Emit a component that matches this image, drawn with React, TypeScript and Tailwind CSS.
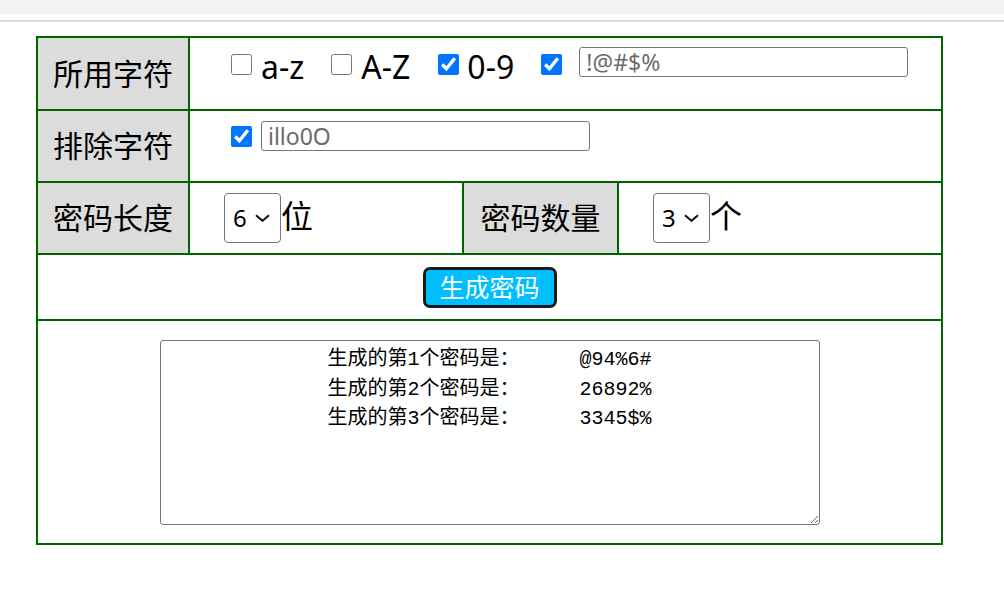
import { useState } from 'react';

const cellBorder = 'border-2 border-[#006400]';
const labelCell = `${cellBorder} bg-[#dcdcdc] text-center align-middle text-[30px] leading-[40px] p-0`;

function FakeSelect({ value }: { value: string }) {
  return (
    <div className="flex items-center w-[57px] h-[50px] border border-[#767676] rounded-[4px] bg-white pl-[8px]">
      <span className="text-[24px] leading-none">{value}</span>
      <svg className="ml-[8px]" width="15" height="8" viewBox="0 0 15 8" fill="none">
        <polyline points="1,1.2 7.5,6.8 14,1.2" stroke="#111" strokeWidth="2" />
      </svg>
    </div>
  );
}

export default function App() {
  const [lower, setLower] = useState(false);
  const [upper, setUpper] = useState(false);
  const [digits, setDigits] = useState(true);
  const [symbols, setSymbols] = useState(true);
  const [exclude, setExclude] = useState(true);

  const output = [
    '生成的第1个密码是：     @94%6#',
    '生成的第2个密码是：     26892%',
    '生成的第3个密码是：     3345$%',
  ].join('\n');

  return (
    <div className="w-[1004px] h-[596px] bg-white text-black font-['Noto_Sans','Noto_Sans_CJK_SC',sans-serif]">
      <div className="h-[14px] bg-[#f1f2f4]" />
      <div className="mt-[6px] h-[2px] bg-[#dcdcdc]" />

      <table className="ml-[36px] mt-[14px] w-[907px] table-fixed border-collapse border-2 border-[#006400]">
        <colgroup>
          <col className="w-[152px]" />
          <col className="w-[274px]" />
          <col className="w-[155px]" />
          <col />
        </colgroup>
        <tbody>
          {/* 所用字符 */}
          <tr className="h-[73px]">
            <td className={labelCell}>所用字符</td>
            <td colSpan={3} className={`${cellBorder} align-top pt-[9px] pl-[41px]`}>
              <div className="flex items-start h-[30px]">
                <input type="checkbox" checked={lower} onChange={() => setLower(!lower)} className="w-[21px] h-[21px] mt-[7px] accent-[#0075ff]" />
                <span className="ml-[9px] mt-[2px] text-[32px] leading-[36px]">a-z</span>
                <input type="checkbox" checked={upper} onChange={() => setUpper(!upper)} className="ml-[27px] w-[21px] h-[21px] mt-[7px] accent-[#0075ff]" />
                <span className="ml-[9px] mt-[2px] text-[32px] leading-[36px]">A-Z</span>
                <input type="checkbox" checked={digits} onChange={() => setDigits(!digits)} className="ml-[28px] w-[21px] h-[21px] mt-[7px] accent-[#0075ff]" />
                <span className="ml-[8px] mt-[2px] text-[32px] leading-[36px]">0-9</span>
                <input type="checkbox" checked={symbols} onChange={() => setSymbols(!symbols)} className="ml-[27px] w-[21px] h-[21px] mt-[7px] accent-[#0075ff]" />
                <input
                  type="text"
                  defaultValue="!@#$%"
                  className="ml-[17px] w-[329px] h-[30px] border border-[#767676] rounded-[3px] pl-[6px] text-[23px] leading-[28px] text-[#6b6b6b] bg-white outline-none"
                />
              </div>
            </td>
          </tr>

          {/* 排除字符 */}
          <tr className="h-[72px]">
            <td className={labelCell}>排除字符</td>
            <td colSpan={3} className={`${cellBorder} align-top pt-[10px] pl-[41px]`}>
              <div className="flex items-start h-[30px]">
                <input type="checkbox" checked={exclude} onChange={() => setExclude(!exclude)} className="w-[21px] h-[21px] mt-[5px] accent-[#0075ff]" />
                <input
                  type="text"
                  defaultValue="illo0O"
                  className="ml-[9px] w-[329px] h-[30px] border border-[#767676] rounded-[3px] pl-[6px] text-[23px] leading-[28px] text-[#6b6b6b] bg-white outline-none"
                />
              </div>
            </td>
          </tr>

          {/* 密码长度 / 密码数量 */}
          <tr className="h-[72px]">
            <td className={labelCell}>密码长度</td>
            <td className={`${cellBorder} align-middle pl-[34px]`}>
              <div className="flex items-center">
                <FakeSelect value="6" />
                <span className="text-[32px] leading-[40px] -mt-[5px]">位</span>
              </div>
            </td>
            <td className={labelCell}>密码数量</td>
            <td className={`${cellBorder} align-middle pl-[34px]`}>
              <div className="flex items-center">
                <FakeSelect value="3" />
                <span className="text-[32px] leading-[40px] -mt-[5px]">个</span>
              </div>
            </td>
          </tr>

          {/* 按钮 */}
          <tr className="h-[66px]">
            <td colSpan={4} className={`${cellBorder} text-center align-middle`}>
              <button className="inline-flex items-center justify-center w-[134px] h-[41px] bg-[#00bfff] border-[3px] border-[#1a1a1a] rounded-[7px] text-white text-[25px] leading-none">
                生成密码
              </button>
            </td>
          </tr>

          {/* 输出 */}
          <tr className="h-[224px]">
            <td colSpan={4} className={`${cellBorder} align-top pt-[19px]`}>
              <textarea
                readOnly
                value={output}
                className="block mx-auto w-[660px] h-[185px] border border-[#767676] rounded-[3px] bg-white px-[3px] pt-[4px] pb-[3px] text-center text-[20px] leading-[29.5px] whitespace-pre font-['Liberation_Mono','Noto_Sans_CJK_SC',monospace] outline-none"
              />
            </td>
          </tr>
        </tbody>
      </table>
    </div>
  );
}
